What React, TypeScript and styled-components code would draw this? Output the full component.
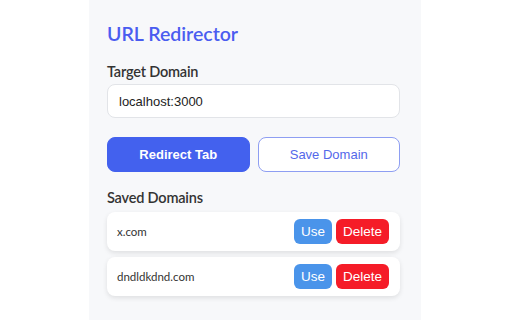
import React from "react";
import styled, { createGlobalStyle } from "styled-components";

const GlobalStyle = createGlobalStyle`
  html, body {
    margin: 0;
    padding: 0;
    background: #ffffff;
  }
  body {
    font-family: Lato, "Liberation Sans", Arial, sans-serif;
  }
`;

const Page = styled.div`
  display: flex;
  justify-content: center;
  width: 512px;
  height: 320px;
  overflow: hidden;
`;

const Panel = styled.div`
  width: 332px;
  min-height: 320px;
  box-sizing: border-box;
  margin-left: -2px;
  padding: 20px 21px 0 18px;
  background: #f7f8fa;
  display: flex;
  flex-direction: column;
`;

const Title = styled.h1`
  margin: 0 0 14px;
  font-family: Lato, sans-serif;
  font-size: 19.5px;
  line-height: 28px;
  font-weight: 600;
  color: #4a5cf0;
`;

const Label = styled.div`
  font-family: Lato, sans-serif;
  font-size: 14.5px;
  line-height: 20px;
  font-weight: 600;
  letter-spacing: -0.2px;
  color: #333;
  margin-bottom: 2px;
`;

const Input = styled.input`
  box-sizing: border-box;
  width: 100%;
  height: 34px;
  padding: 0 11px;
  border: 1px solid #e2e4e8;
  border-radius: 8px;
  background: #fff;
  font-family: "Liberation Sans", Arial, sans-serif;
  font-size: 13px;
  color: #222;
  outline: none;
`;

const ButtonRow = styled.div`
  display: grid;
  grid-template-columns: 1fr 1fr;
  gap: 8px;
  margin-top: 19px;
`;

const MainButton = styled.button<{ $primary?: boolean }>`
  height: 35px;
  border-radius: 8px;
  font-family: "Liberation Sans", Arial, sans-serif;
  font-size: 13px;
  cursor: pointer;
  border: ${(p) => (p.$primary ? "1px solid #4361ee" : "1.5px solid #8e9ef2")};
  background: ${(p) => (p.$primary ? "#4361ee" : "#ffffff")};
  color: ${(p) => (p.$primary ? "#ffffff" : "#5468ea")};
  font-weight: ${(p) => (p.$primary ? 700 : 400)};
`;

const SectionTitle = styled(Label)`
  margin-top: 16px;
  margin-bottom: 4px;
`;

const List = styled.div`
  display: flex;
  flex-direction: column;
  gap: 6px;
`;

const Card = styled.div`
  display: flex;
  align-items: center;
  justify-content: space-between;
  height: 39px;
  padding: 0 11px 0 10px;
  background: #fff;
  border-radius: 8px;
  box-shadow: 0 2px 5px rgba(0, 0, 0, 0.1);
`;

const DomainName = styled.span`
  font-family: Lato, sans-serif;
  font-size: 11.5px;
  color: #333;
`;

const Actions = styled.div`
  display: flex;
  gap: 4px;
`;

const SmallButton = styled.button<{ $danger?: boolean }>`
  height: 25px;
  padding: 0 7px;
  border: none;
  border-radius: 6px;
  font-family: "Liberation Sans", Arial, sans-serif;
  font-size: 13.5px;
  color: #fff;
  cursor: pointer;
  background: ${(p) => (p.$danger ? "#f51c28" : "#4a94ea")};
`;

const domains = ["x.com", "dndldkdnd.com"];

export default function App() {
  return (
    <>
      <GlobalStyle />
      <Page>
        <Panel>
          <Title>URL Redirector</Title>
          <Label>Target Domain</Label>
          <Input defaultValue="localhost:3000" />
          <ButtonRow>
            <MainButton $primary>Redirect Tab</MainButton>
            <MainButton>Save Domain</MainButton>
          </ButtonRow>
          <SectionTitle>Saved Domains</SectionTitle>
          <List>
            {domains.map((d) => (
              <Card key={d}>
                <DomainName>{d}</DomainName>
                <Actions>
                  <SmallButton>Use</SmallButton>
                  <SmallButton $danger>Delete</SmallButton>
                </Actions>
              </Card>
            ))}
          </List>
        </Panel>
      </Page>
    </>
  );
}
